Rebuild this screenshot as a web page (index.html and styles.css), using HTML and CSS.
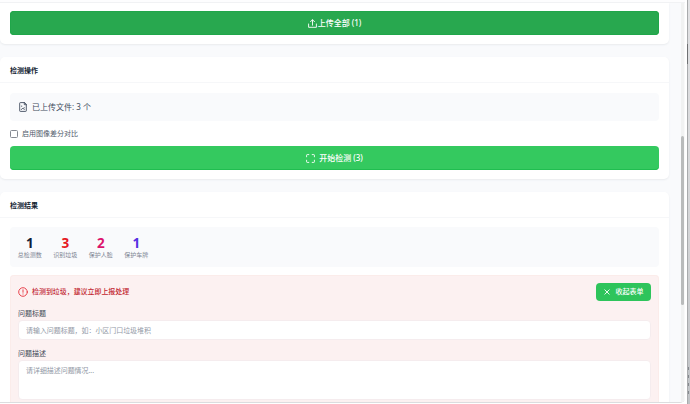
FILE: index.html
```html
<!DOCTYPE html>
<html lang="zh-CN">
<head>
  <meta charset="UTF-8">
  <title>垃圾检测</title>
  <meta name="viewport" content="width=device-width, initial-scale=1">
  <link rel="stylesheet" href="styles.css">
</head>
<body>
  <div class="window">
    <div class="topbar"></div>
    <div class="body">
      <main class="content">
        <section class="card card-upload">
          <button class="btn btn-upload">
            <svg width="9" height="9" viewBox="0 0 9 9"><path d="M4.5 6.2V.8M2.5 2.7l2-2 2 2M.6 5v3.3h7.8V5"/></svg>
            <span>上传全部 (1)</span>
          </button>
        </section>

        <section class="card card-action">
          <h2 class="card-title">检测操作</h2>
          <div class="card-body">
            <div class="file-info">
              <svg width="9" height="10" viewBox="0 0 9 10"><path d="M5.3.6H1.3Q.7.6.7 1.2v7.6q0 .6.6.6h5.4q.6 0 .6-.6V2.7zM5.3.6v2.1h2M2.3 7.6l1.5-1.6 1.5 1.6M5.2 5.6v.3M2.7 4v.4"/></svg>
              <span>已上传文件: 3 个</span>
            </div>
            <label class="check"><input type="checkbox">启用图像差分对比</label>
            <button class="btn btn-detect">
              <svg width="9" height="9" viewBox="0 0 9 9"><path d="M.6 2.8V1.2Q.6.6 1.2.6h1.6M6.2.6h1.6q.6 0 .6.6v1.6M8.4 6.2v1.6q0 .6-.6.6H6.2M2.8 8.4H1.2q-.6 0-.6-.6V6.2"/></svg>
              <span>开始检测 (3)</span>
            </button>
          </div>
        </section>

        <section class="card card-result">
          <h2 class="card-title">检测结果</h2>
          <div class="card-body">
            <div class="stats">
              <div class="stat"><b>1</b><span>总检测数</span></div>
              <div class="stat red"><b>3</b><span>识别垃圾</span></div>
              <div class="stat pink"><b>2</b><span>保护人脸</span></div>
              <div class="stat purple"><b>1</b><span>保护车牌</span></div>
            </div>
            <div class="report">
              <div class="report-head">
                <svg width="10" height="10" viewBox="0 0 10 10"><circle cx="5" cy="5" r="4.3"/><path d="M5 2.8v2.5M5 6.9v.2"/></svg>
                <span>检测到垃圾，建议立即上报处理</span>
                <button class="btn btn-toggle">
                  <svg width="6" height="6" viewBox="0 0 6 6"><path d="M.8.8l4.4 4.4M5.2.8L.8 5.2"/></svg>
                  <span>收起表单</span>
                </button>
              </div>
              <label class="label" for="title">问题标题</label>
              <input class="field" id="title" type="text" placeholder="请输入问题标题，如：小区门口垃圾堆积">
              <label class="label" for="desc">问题描述</label>
              <textarea class="field area" id="desc" placeholder="请详细描述问题情况..."></textarea>
            </div>
          </div>
        </section>
      </main>
      <div class="scrollbar"><div class="thumb"></div></div>
    </div>
  </div>
  <div class="edge"><div class="edge-mark"></div><div class="edge-dots"></div></div>
</body>
</html>
```
FILE: styles.css
```css
* { box-sizing: border-box; }
body { margin: 0; width: 690px; height: 404px; display: flex; overflow: hidden; background: #fff; color: #111c30; font: 8px/12px "Noto Sans", "Noto Sans CJK SC", sans-serif; }
svg { flex: none; fill: none; stroke: currentColor; stroke-width: .9; stroke-linecap: round; stroke-linejoin: round; }

.window { width: 685px; height: 403px; display: flex; flex-direction: column; overflow: hidden; border-bottom: 1px solid #dcdddf; border-bottom-right-radius: 5px; }
.topbar { flex: none; height: 3px; background: #fdfdfe; border-bottom: 1px solid #f1f2f4; }
.body { flex: 1; min-height: 0; display: flex; background: #f9fafc; }
.content { width: 681px; overflow: hidden; padding-right: 12px; }

.card { background: #fff; border-radius: 5px; box-shadow: 0 1px 2px #e9ebee; margin-bottom: 13px; }
.card-upload { height: 41px; padding: 8px 10px 0; border-radius: 0 0 5px 5px; }
.card-action { height: 122px; }
.card-title { margin: 0; height: 26px; padding: 0 10px; font-size: 7px; line-height: 27px; font-weight: 700; border-bottom: 1px solid #f6f7f9; }
.card-body { padding: 10px 10px 0; }

.btn { display: flex; align-items: center; justify-content: center; width: 100%; height: 24px; margin: 0; padding: 0; border: 0; border-radius: 4px; color: #fff; font: 500 8px/12px "Noto Sans", "Noto Sans CJK SC", sans-serif; }
.btn-upload { gap: 1px; background: #28a84f; box-shadow: inset 0 0 0 1px #20a64a; }
.btn-detect { gap: 4px; background: #34c95f; box-shadow: inset 0 -1px 0 #20bd50; }

.file-info { display: flex; align-items: center; gap: 4px; height: 28px; padding: 0 9px; background: #f9fafc; border-radius: 4px; color: #414c5d; }
.check { display: flex; align-items: center; gap: 4px; height: 25px; font-size: 7px; color: #515b6b; }
.check input { appearance: none; width: 8px; height: 8px; margin: 0; border: 1px solid #858a92; border-radius: 1.5px; background: #fff; }

.stats { display: flex; gap: 12px; height: 40px; padding: 8px 8px 0; margin-top: -1px; background: #f9fafc; border-radius: 4px; }
.stat { width: 23.5px; display: flex; flex-direction: column; align-items: center; color: #102039; }
.stat b { font-size: 13.5px; line-height: 16px; }
.stat span { font-size: 6px; line-height: 8px; white-space: nowrap; color: #7d8592; }
.red { color: #e51822; }
.pink { color: #dc146c; }
.purple { color: #5630e2; }

.report { height: 140px; margin-top: 8px; padding: 8px 8px 0; background: #fcf1f1; box-shadow: inset 0 0 0 1px #fbecea; border-radius: 4px; }
.report-head { display: flex; align-items: center; gap: 4px; height: 18px; margin-bottom: 7px; color: #c22530; font-size: 6.95px; font-weight: 500; }
.report-head > svg { color: #e5303b; }
.btn-toggle { width: 55px; height: 18px; gap: 6px; margin-left: auto; background: #2ec45b; font-size: 7px; }
.label { display: block; height: 12px; font-size: 7px; line-height: 12px; color: #3e4756; }
.field { display: block; width: 100%; height: 20px; margin: 0 0 8px; padding: 0 7px; border: 1px solid #f5ecee; border-radius: 4px; background: #fff; font: 6.95px/12px "Noto Sans", "Noto Sans CJK SC", sans-serif; resize: none; }
.field::placeholder { color: #9299a6; opacity: 1; }
.area { height: 40px; padding-top: 4px; overflow: hidden; }

.scrollbar { width: 4px; padding-top: 133px; background: #f1f2f2; border-right: 1px solid #f9f9f9; }
.thumb { width: 3px; height: 169px; border-radius: 2px; background: #b9bbbb; }

.edge { width: 3px; margin-left: 2px; height: 404px; border-left: 1px solid #a9abad; background: linear-gradient(#e2e2e4, #d3d4d6 60%, #bfc2c5); }
.edge-mark { width: 1px; height: 20px; margin: 44px 0 0 -1px; background: #6f7173; }
.edge-dots { width: 1px; height: 30px; margin-top: 303px; background: repeating-linear-gradient(#85898e 0 3px, #c3c6c9 3px 8px); }
```
